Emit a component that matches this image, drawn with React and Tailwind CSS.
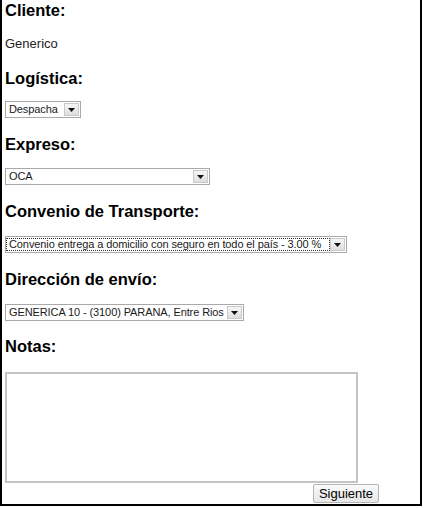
import React from "react";

function Arrow() {
  return (
    <span className="flex h-full w-[15px] shrink-0 items-center justify-center border border-[#c9c9c9] bg-gradient-to-b from-[#f6f6f6] to-[#dedede]">
      <svg width="7" height="4" viewBox="0 0 7 4">
        <path d="M0 0h7L3.5 4z" fill="#111" />
      </svg>
    </span>
  );
}

function FakeSelect({ value, width, focused }) {
  return (
    <div
      className={`flex h-[17px] items-center border border-[#a9a9a9] bg-white pr-px ${width}`}
    >
      <span
        className={`flex h-[13px] flex-1 items-center overflow-hidden whitespace-nowrap pl-[2px] text-[11px] leading-[13px] tracking-[-0.1px] text-[#1a1a1a] ${
          focused ? "border border-dotted border-[#333]" : "border border-transparent"
        }`}
      >
        {value}
      </span>
      <span className="h-[15px] py-px">
        <Arrow />
      </span>
    </div>
  );
}

function Heading({ children, className = "" }) {
  return (
    <h3 className={`text-[16.5px] font-bold leading-[18px] text-black ${className}`}>
      {children}
    </h3>
  );
}

export default function App() {
  return (
    <div
      className="h-[506px] w-[422px] border-r-2 border-b-2 border-l-2 border-black bg-white pl-[3px] pt-px"
      style={{ fontFamily: '"Liberation Sans", Arial, sans-serif' }}
    >
      <Heading>Cliente:</Heading>
      <p className="mt-[17px] text-[13px] leading-[15px] text-[#222]">Generico</p>

      <Heading className="mt-[18px]">Logística:</Heading>
      <div className="mt-[14px]">
        <FakeSelect value="Despacha" width="w-[76px]" />
      </div>

      <Heading className="mt-[17px]">Expreso:</Heading>
      <div className="mt-[15px]">
        <FakeSelect value="OCA" width="w-[205px]" />
      </div>

      <Heading className="mt-[17px]">Convenio de Transporte:</Heading>
      <div className="mt-[16px]">
        <FakeSelect
          value="Convenio entrega a domicilio con seguro en todo el país - 3.00 %"
          width="w-[342px]"
          focused
        />
      </div>

      <Heading className="mt-[17px]">Dirección de envío:</Heading>
      <div className="mt-[16px]">
        <FakeSelect
          value="GENERICA 10 - (3100) PARANA, Entre Rios"
          width="w-[239px]"
        />
      </div>

      <Heading className="mt-[16px]">Notas:</Heading>
      <textarea className="mt-[17px] block h-[111px] w-[353px] resize-none border-2 border-[#c4c4c4] bg-white text-[13px] outline-none" />

      <div className="mt-px flex pl-[308px]">
        <button className="h-[19px] w-[66px] rounded-[2px] border border-[#b5b5b5] bg-gradient-to-b from-[#fbfbfb] to-[#e6e6e6] text-[13px] leading-[15px] text-black">
          Siguiente
        </button>
      </div>
    </div>
  );
}
